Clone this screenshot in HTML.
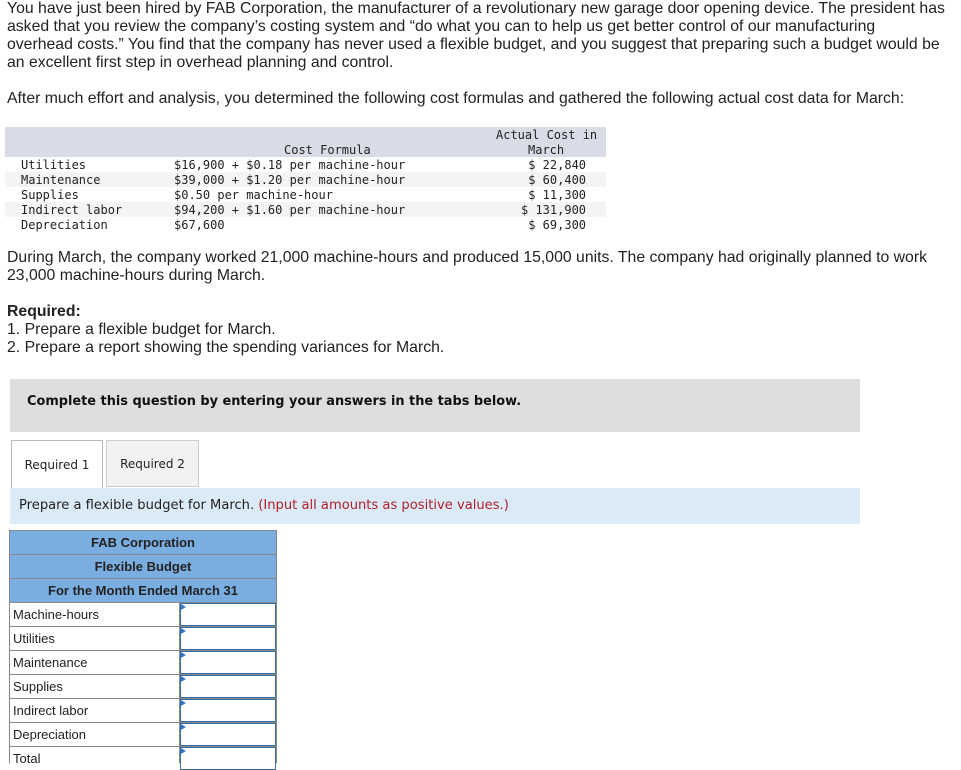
<!DOCTYPE html>
<html><head><meta charset="utf-8"><style>
body{margin:0;width:961px;height:763px;overflow:hidden;background:#fff;font-family:"Liberation Sans",Arial,sans-serif;color:#222;position:relative}
.p{position:absolute;left:7px;font-size:15.8px;line-height:18px;margin:0;width:943px}
.m{position:absolute;font-family:"DejaVu Sans Mono","Liberation Mono",monospace;font-size:12px;line-height:15px;white-space:pre;color:#222}
.ab{position:absolute}
</style></head><body>
<p class="p" style="top:0;white-space:nowrap;width:auto">You have just been hired by FAB Corporation, the manufacturer of a revolutionary new garage door opening device. The president has<br>asked that you review the company’s costing system and “do what you can to help us get better control of our manufacturing<br>overhead costs.” You find that the company has never used a flexible budget, and you suggest that preparing such a budget would be<br>an excellent first step in overhead planning and control.</p>
<p class="p" style="top:90px">After much effort and analysis, you determined the following cost formulas and gathered the following actual cost data for March:</p>

<div class="ab" style="left:5px;top:127px;width:601px;height:30px;background:#d9dce6"></div>
<div class="ab" style="left:5px;top:172px;width:601px;height:15px;background:#f4f4f4"></div>
<div class="ab" style="left:5px;top:202px;width:601px;height:15px;background:#f4f4f4"></div>
<div class="m" style="left:284px;top:143px">Cost Formula</div>
<div class="m" style="left:496px;top:128px">Actual Cost in</div>
<div class="m" style="left:528px;top:143px">March</div>
<div class="m" style="left:21px;top:158px">Utilities
Maintenance
Supplies
Indirect labor
Depreciation</div>
<div class="m" style="left:174px;top:158px">$16,900 + $0.18 per machine-hour
$39,000 + $1.20 per machine-hour
$0.50 per machine-hour
$94,200 + $1.60 per machine-hour
$67,600</div>
<div class="m" style="left:521px;top:158px"> $ 22,840
 $ 60,400
 $ 11,300
$ 131,900
 $ 69,300</div>

<p class="p" style="top:249px">During March, the company worked 21,000 machine-hours and produced 15,000 units. The company had originally planned to work 23,000 machine-hours during March.</p>
<p class="p" style="top:303px"><b>Required:</b><br>1. Prepare a flexible budget for March.<br>2. Prepare a report showing the spending variances for March.</p>

<div class="ab" style="left:10px;top:379px;width:850px;height:53px;background:#dedede"></div>
<div class="ab" style="left:27px;top:394px;font-size:12.9px;font-weight:bold;font-family:'DejaVu Sans',sans-serif;color:#111">Complete this question by entering your answers in the tabs below.</div>

<div class="ab" style="left:11px;top:440px;width:92px;height:48px;border:1px solid #bbb;border-bottom:none;background:#fff;font-size:12px;font-family:'DejaVu Sans',sans-serif;text-align:center;line-height:48px;box-sizing:border-box">Required 1</div>
<div class="ab" style="left:106px;top:440px;width:93px;height:47px;border:1px solid #ccc;background:#f2f2f2;font-size:12px;font-family:'DejaVu Sans',sans-serif;text-align:center;line-height:47px;box-sizing:border-box">Required 2</div>
<div class="ab" style="left:10px;top:488px;width:850px;height:36px;background:#dbeaf7"></div>
<div class="ab" style="left:19px;top:498px;font-size:13.1px;font-family:'DejaVu Sans',sans-serif">Prepare a flexible budget for March. <span style="color:#b0202a">(Input all amounts as positive values.)</span></div>

<div class="ab" style="left:9px;top:530px;width:268px;height:233px;background:#888"></div>
<div class="ab" style="left:10px;top:531px;width:266px;height:23px;background:#7aaee0;font-weight:bold;font-size:13px;text-align:center;line-height:23px">FAB Corporation</div>
<div class="ab" style="left:10px;top:555px;width:266px;height:23px;background:#7aaee0;font-weight:bold;font-size:13px;text-align:center;line-height:23px">Flexible Budget</div>
<div class="ab" style="left:10px;top:579px;width:266px;height:23px;background:#7aaee0;font-weight:bold;font-size:13px;text-align:center;line-height:23px">For the Month Ended March 31</div>
<div id="rows"></div>
<script>
var n=["Machine-hours","Utilities","Maintenance","Supplies","Indirect labor","Depreciation","Total"],h="";
n.forEach(function(t,i){var y=603+i*24;
h+='<div class="ab" style="left:10px;top:'+y+'px;width:169px;height:23px;background:#fff;font-size:13px;line-height:23px;padding-left:3px;box-sizing:border-box">'+t+'</div>';
h+='<div class="ab" style="left:180px;top:'+y+'px;width:96px;height:23px;background:#fff;border:1px solid #3a6ea5;box-sizing:border-box"></div>';
h+='<div class="ab" style="left:181px;top:'+(y+1)+'px;width:0;height:0;border-top:3px solid transparent;border-bottom:3px solid transparent;border-left:5px solid #3a78c8"></div>';});
document.getElementById("rows").innerHTML=h;
</script>
</body></html>
